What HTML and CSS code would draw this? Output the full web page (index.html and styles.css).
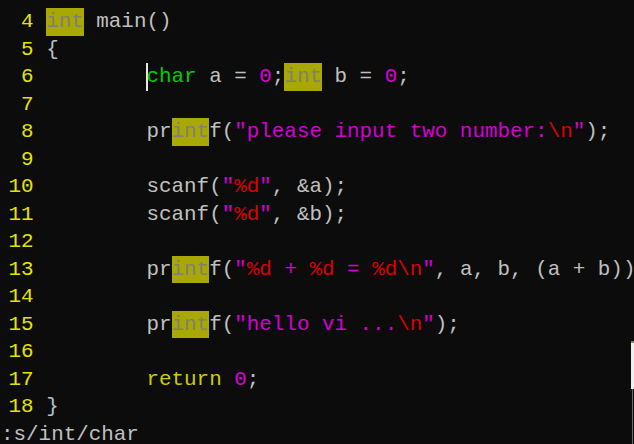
FILE: index.html
```html
<!DOCTYPE html>
<html>
<head>
<meta charset="utf-8">
<link rel="stylesheet" href="styles.css">
</head>
<body>
<div class="term">
  <div class="buf">
    <div class="ln"><span class="nr">3</span></div>
    <div class="ln"><span class="nr">4</span><span class="hl">int</span> main()</div>
    <div class="ln"><span class="nr">5</span><span class="br">{</span></div>
    <div class="ln"><span class="nr">6</span>        <span class="ty"><span class="cur">c</span>har</span> a = <span class="num">0</span>;<span class="hl">int</span> b = <span class="num">0</span>;</div>
    <div class="ln"><span class="nr">7</span></div>
    <div class="ln"><span class="nr">8</span>        pr<span class="hl">int</span>f(<span class="str">"please input two number:</span><span class="sp">\n</span><span class="str">"</span>);</div>
    <div class="ln"><span class="nr">9</span></div>
    <div class="ln"><span class="nr">10</span>        scanf(<span class="str">"</span><span class="sp">%d</span><span class="str">"</span>, &amp;a);</div>
    <div class="ln"><span class="nr">11</span>        scanf(<span class="str">"</span><span class="sp">%d</span><span class="str">"</span>, &amp;b);</div>
    <div class="ln"><span class="nr">12</span></div>
    <div class="ln"><span class="nr">13</span>        pr<span class="hl">int</span>f(<span class="str">"</span><span class="sp">%d</span><span class="str"> + </span><span class="sp">%d</span><span class="str"> = </span><span class="sp">%d\n</span><span class="str">"</span>, a, b, (a + b));</div>
    <div class="ln"><span class="nr">14</span></div>
    <div class="ln"><span class="nr">15</span>        pr<span class="hl">int</span>f(<span class="str">"hello vi ...</span><span class="sp">\n</span><span class="str">"</span>);</div>
    <div class="ln"><span class="nr">16</span></div>
    <div class="ln"><span class="nr">17</span>        <span class="st">return</span> <span class="num">0</span>;</div>
    <div class="ln"><span class="nr">18</span><span class="br">}</span></div>
    <div class="ln cmd">:s/int/char</div>
  </div>
  <div class="edge"></div>
  <div class="edge2"></div>
</div>
</body>
</html>
```
FILE: styles.css
```css
html, body {
  margin: 0;
  padding: 0;
  background: #0c0c0c;
  overflow: hidden;
}
.term {
  position: relative;
  width: 634px;
  height: 444px;
  overflow: hidden;
  background: #0c0c0c;
}
.buf {
  margin-top: -19.2px;
  font-family: "Liberation Mono", "DejaVu Sans Mono", monospace;
  font-size: 20.9px;
  color: #c0c0c0;
}
.ln {
  height: 27.5px;
  line-height: 27.5px;
  white-space: pre;
}
.nr {
  display: inline-block;
  box-sizing: border-box;
  width: 46.16px;
  padding-right: 12.54px;
  text-align: right;
  color: #e4e400;
}
.cmd {
  padding-left: 1px;
}
.hl {
  display: inline-block;
  height: 27.5px;
  vertical-align: top;
  background: #a8a800;
  color: #808078;
}
.br { color: #b8c0cc; }
.ty { color: #00cc00; }
.num { color: #dd00dd; }
.str { color: #d400d4; }
.sp { color: #dd0000; }
.st { color: #cccc00; }
.cur {
  display: inline-block;
  height: 27.5px;
  vertical-align: top;
  box-shadow: inset 2px 0 0 #e8e8e8;
}
.edge {
  position: absolute;
  left: 631px;
  top: 341px;
  width: 3px;
  height: 48px;
  background: #f0f0f0;
  border-top: 2px solid #8a7a6a;
  box-sizing: border-box;
}
.edge2 {
  position: absolute;
  left: 632px;
  top: 389px;
  width: 1px;
  height: 55px;
  background: #6a6a6a;
}
```
